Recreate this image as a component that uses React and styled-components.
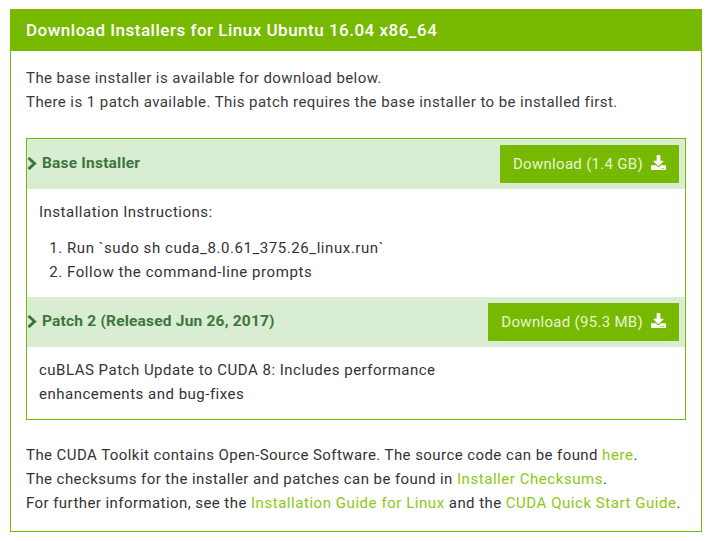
import React from 'react';
import styled, { createGlobalStyle } from 'styled-components';
import { FaDownload } from 'react-icons/fa';

const GlobalStyle = createGlobalStyle`
  html, body {
    margin: 0;
    padding: 0;
    background: #fff;
  }
  body {
    font-family: Roboto, "Liberation Sans", sans-serif;
    font-size: 15px;
    color: #333;
  }
`;

const Chevron = () => (
  <ChevronIcon viewBox='0 0 10 13'>
    <path d='M1.5 1 L7.5 6.5 L1.5 12' fill='none' stroke='currentColor' strokeWidth='3' />
  </ChevronIcon>
);

export default function App() {
  return (
    <Page>
      <GlobalStyle />
      <Panel>
        <PanelTitle>Download Installers for Linux Ubuntu 16.04 x86_64</PanelTitle>
        <PanelBody>
          <Intro>
            The base installer is available for download below.
            <br />
            There is 1 patch available. This patch requires the base installer to be installed first.
          </Intro>
          <Accordion>
            <SectionHeading>
              <SectionTitle>
                <Chevron />
                Base Installer
              </SectionTitle>
              <DownloadButton href='#'>
                Download (1.4 GB)
                <FaDownload />
              </DownloadButton>
            </SectionHeading>
            <SectionBody>
              <p>Installation Instructions:</p>
              <Steps>
                <li>Run `sudo sh cuda_8.0.61_375.26_linux.run`</li>
                <li>Follow the command-line prompts</li>
              </Steps>
            </SectionBody>
            <SectionHeading>
              <SectionTitle>
                <Chevron />
                Patch 2 (Released Jun 26, 2017)
              </SectionTitle>
              <DownloadButton href='#'>
                Download (95.3 MB)
                <FaDownload />
              </DownloadButton>
            </SectionHeading>
            <PatchBody>
              cuBLAS Patch Update to CUDA 8: Includes performance
              <br />
              enhancements and bug-fixes
            </PatchBody>
          </Accordion>
          <Notes>
            The CUDA Toolkit contains Open-Source Software. The source code can be found <a href='#'>here</a>.
            <br />
            The checksums for the installer and patches can be found in <a href='#'>Installer Checksums</a>.
            <br />
            For further information, see the <a href='#'>Installation Guide for Linux</a> and the <a href='#'>CUDA Quick Start Guide</a>.
          </Notes>
        </PanelBody>
      </Panel>
    </Page>
  );
}

const Page = styled.div`
  width: 713px;
  height: 541px;
  padding: 9px 0 0 10px;
  box-sizing: border-box;
  overflow: hidden;
`;

const Panel = styled.div`
  width: 692px;
  height: 523px;
  box-sizing: border-box;
  border: 1px solid #76b900;
`;

const PanelTitle = styled.h3`
  margin: -1px -1px 0;
  height: 42px;
  padding: 0 15px 0 16px;
  background: #76b900;
  color: #fff;
  font-size: 17px;
  font-weight: 500;
  letter-spacing: 0.5px;
  line-height: 42px;
`;

const PanelBody = styled.div`
  padding: 0 15px;
  letter-spacing: 0.43px;
`;

const Intro = styled.p`
  margin: 0;
  padding-top: 15px;
  line-height: 24px;
  height: 72px;
  color: #3a3a3a;
`;

const Accordion = styled.div`
  width: 660px;
  height: 282px;
  box-sizing: border-box;
  border: 1px solid #76b900;
`;

const SectionHeading = styled.div`
  height: 50px;
  padding: 0 6px 0 0;
  display: flex;
  align-items: center;
  justify-content: space-between;
  background: #d9edd3;
`;

const SectionTitle = styled.div`
  display: flex;
  align-items: center;
  margin-top: -2px;
  color: #3c763d;
  font-size: 15.5px;
  font-weight: 700;
  letter-spacing: 0.2px;
`;

const ChevronIcon = styled.svg`
  width: 10px;
  height: 13px;
  margin-right: 5px;
`;

const DownloadButton = styled.a`
  height: 38px;
  padding: 0 13px;
  display: flex;
  align-items: center;
  gap: 8px;
  background: #76b900;
  color: #e8f5d0;
  font-size: 15px;
  letter-spacing: 0.3px;
  text-decoration: none;
  svg {
    width: 15px;
    height: 15px;
    color: #fff;
    margin-top: -3px;
  }
`;

const SectionBody = styled.div`
  height: 108px;
  box-sizing: border-box;
  padding: 11px 12px 0;
  line-height: 24px;
  letter-spacing: 0.5px;
  p {
    margin: 0 0 12px;
  }
`;

const Steps = styled.ol`
  margin: 0;
  padding: 0 0 0 28px;
  letter-spacing: 0.57px;
`;

const PatchBody = styled.div`
  padding: 11px 12px 0;
  line-height: 24px;
  letter-spacing: 0.5px;
`;

const Notes = styled.p`
  margin: 0;
  padding-top: 23px;
  line-height: 24px;
  a {
    color: #8cc814;
    text-decoration: none;
    letter-spacing: 0.55px;
  }
`;
